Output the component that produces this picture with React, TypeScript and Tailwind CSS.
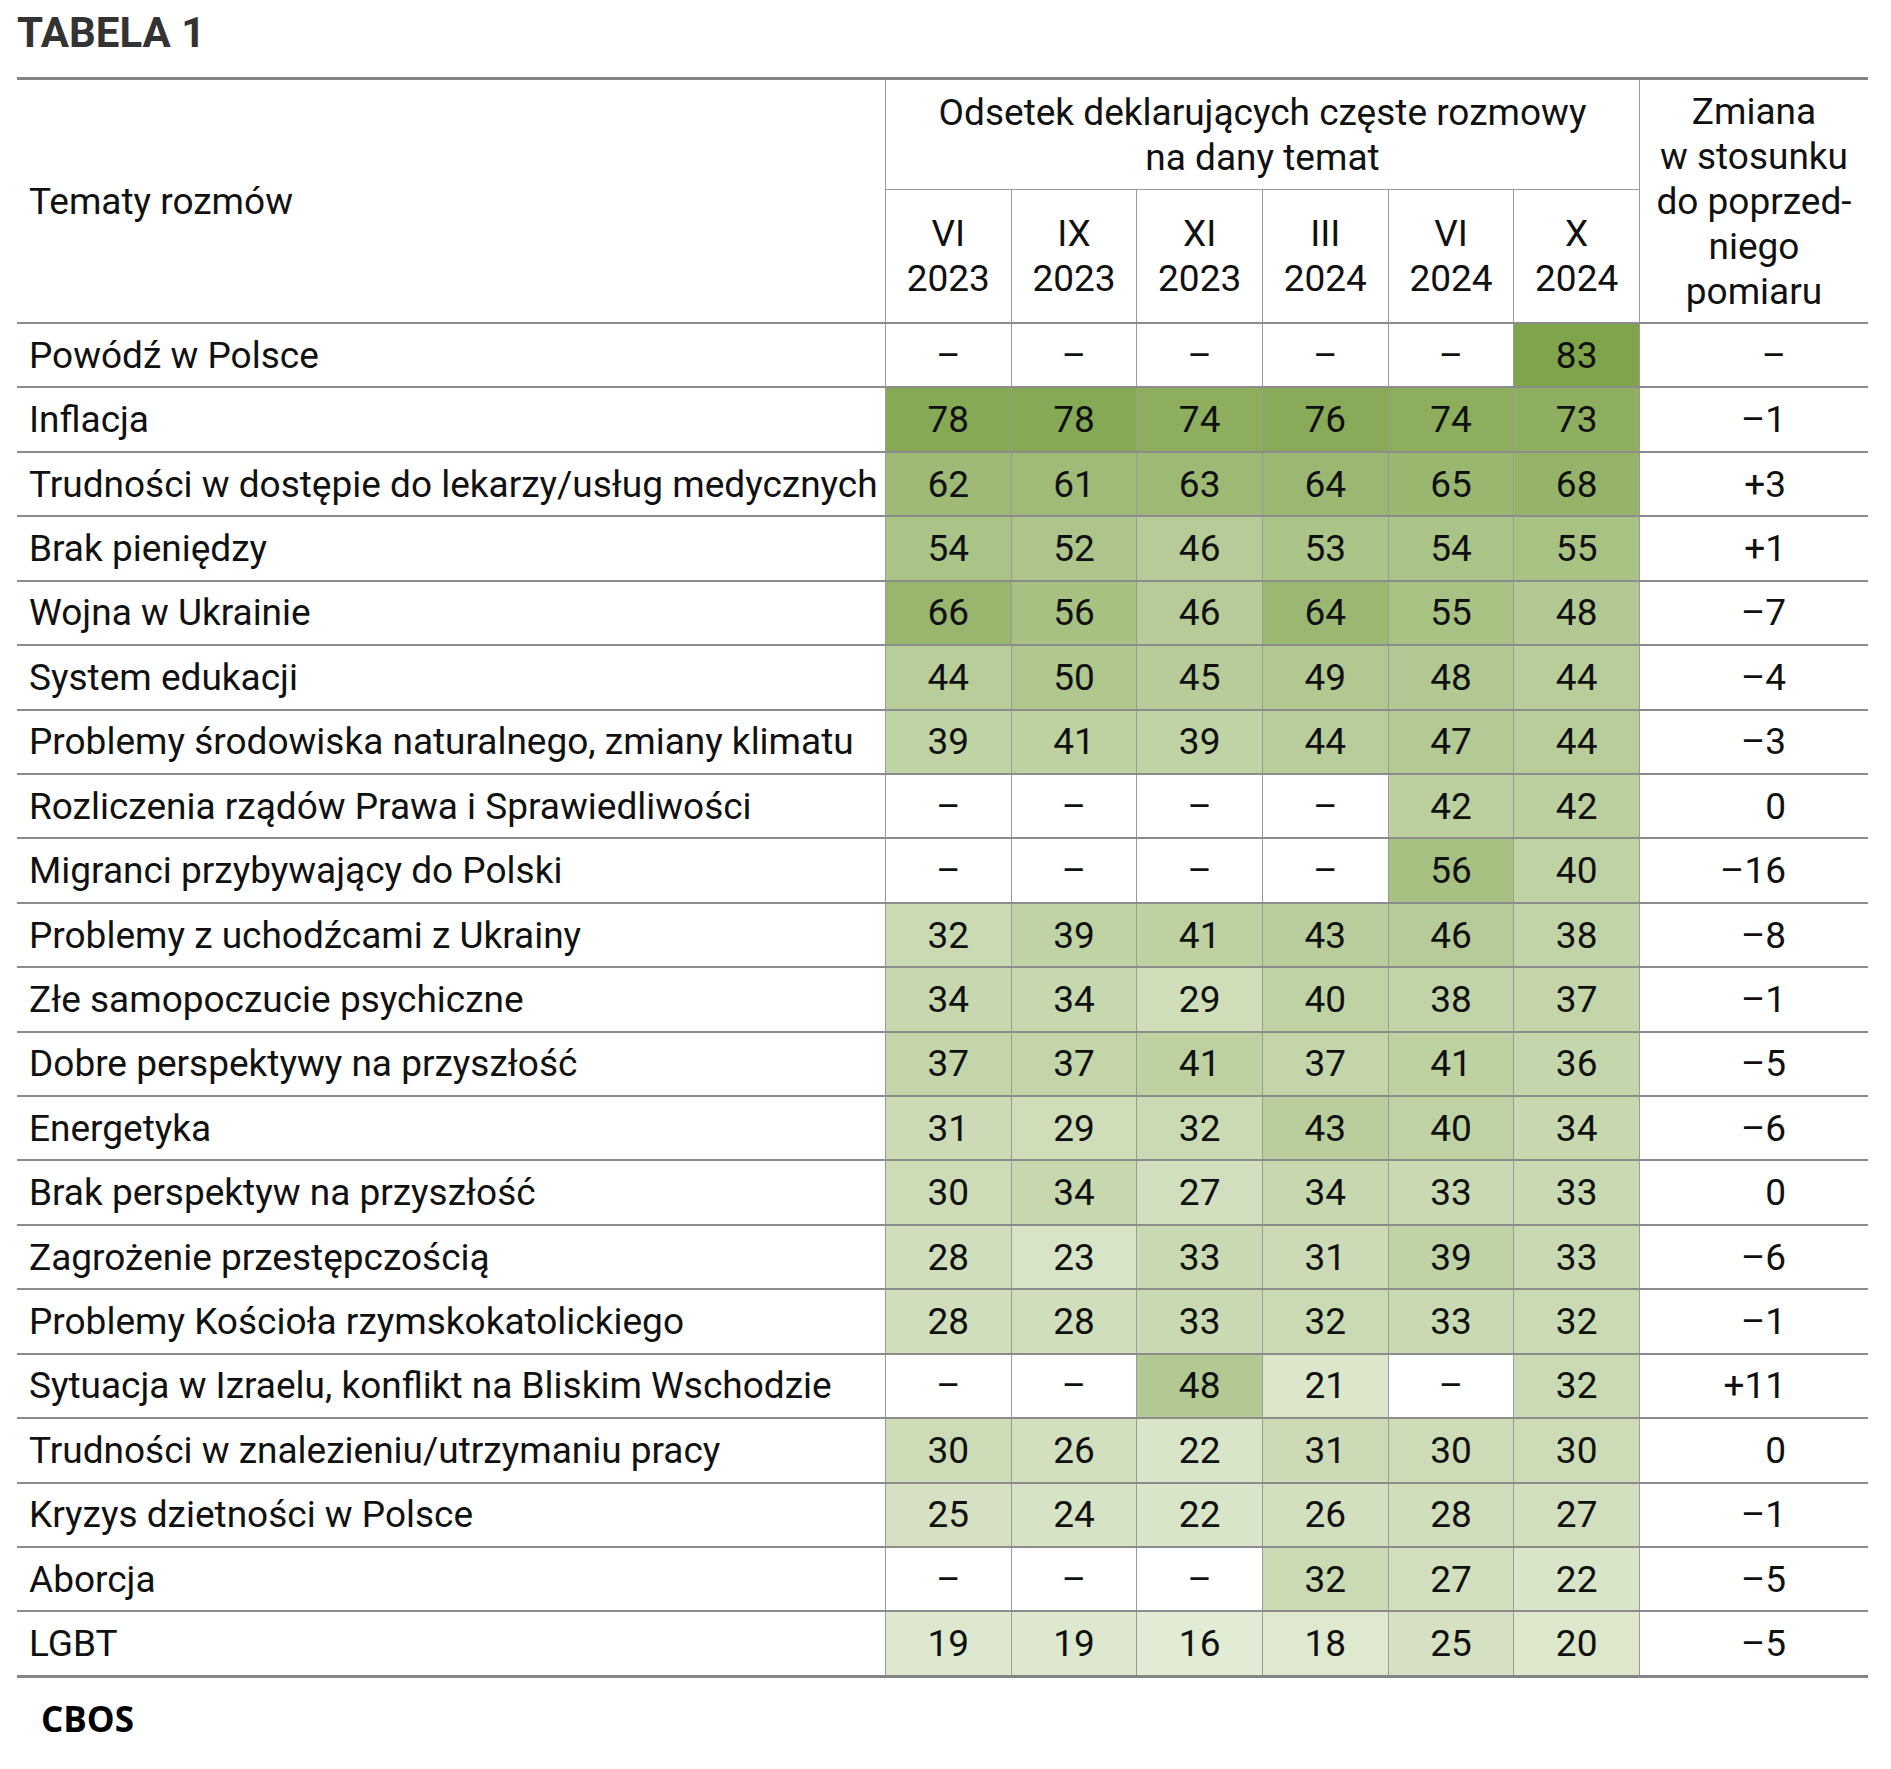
import React from "react";

type Row = {
	label: string;
	values: (number | null)[];
	change: string;
};

const rows: Row[] = [
	{ label: "Powódź w Polsce", values: [null, null, null, null, null, 83], change: "–" },
	{ label: "Inflacja", values: [78, 78, 74, 76, 74, 73], change: "–1" },
	{ label: "Trudności w dostępie do lekarzy/usług medycznych", values: [62, 61, 63, 64, 65, 68], change: "+3" },
	{ label: "Brak pieniędzy", values: [54, 52, 46, 53, 54, 55], change: "+1" },
	{ label: "Wojna w Ukrainie", values: [66, 56, 46, 64, 55, 48], change: "–7" },
	{ label: "System edukacji", values: [44, 50, 45, 49, 48, 44], change: "–4" },
	{ label: "Problemy środowiska naturalnego, zmiany klimatu", values: [39, 41, 39, 44, 47, 44], change: "–3" },
	{ label: "Rozliczenia rządów Prawa i Sprawiedliwości", values: [null, null, null, null, 42, 42], change: "0" },
	{ label: "Migranci przybywający do Polski", values: [null, null, null, null, 56, 40], change: "–16" },
	{ label: "Problemy z uchodźcami z Ukrainy", values: [32, 39, 41, 43, 46, 38], change: "–8" },
	{ label: "Złe samopoczucie psychiczne", values: [34, 34, 29, 40, 38, 37], change: "–1" },
	{ label: "Dobre perspektywy na przyszłość", values: [37, 37, 41, 37, 41, 36], change: "–5" },
	{ label: "Energetyka", values: [31, 29, 32, 43, 40, 34], change: "–6" },
	{ label: "Brak perspektyw na przyszłość", values: [30, 34, 27, 34, 33, 33], change: "0" },
	{ label: "Zagrożenie przestępczością", values: [28, 23, 33, 31, 39, 33], change: "–6" },
	{ label: "Problemy Kościoła rzymskokatolickiego", values: [28, 28, 33, 32, 33, 32], change: "–1" },
	{ label: "Sytuacja w Izraelu, konflikt na Bliskim Wschodzie", values: [null, null, 48, 21, null, 32], change: "+11" },
	{ label: "Trudności w znalezieniu/utrzymaniu pracy", values: [30, 26, 22, 31, 30, 30], change: "0" },
	{ label: "Kryzys dzietności w Polsce", values: [25, 24, 22, 26, 28, 27], change: "–1" },
	{ label: "Aborcja", values: [null, null, null, 32, 27, 22], change: "–5" },
	{ label: "LGBT", values: [19, 19, 16, 18, 25, 20], change: "–5" },
];

const periods = [
	["VI", "2023"],
	["IX", "2023"],
	["XI", "2023"],
	["III", "2024"],
	["VI", "2024"],
	["X", "2024"],
];

// heat colour: light sage at 16 -> olive green at 83
const heat = (v: number | null) => {
	if (v === null) return "#ffffff";
	const t = Math.min(1, Math.max(0, (v - 16) / 67));
	const lo = [226, 235, 212];
	const hi = [127, 164, 75];
	const c = lo.map((l, i) => Math.round(l + (hi[i] - l) * t));
	return `rgb(${c[0]}, ${c[1]}, ${c[2]})`;
};

const App = () => {
	return (
		<div className="h-[1769px] w-[1891px] bg-white font-['Roboto','Liberation_Sans',sans-serif] text-[#111111]">
			<div className="pl-[17px] pt-[12px]">
				<h1 className="text-[42px] leading-none font-bold text-[#333333]">TABELA 1</h1>
			</div>

			<div className="mt-[23px] ml-[17px] w-[1851px] border-t-[3px] border-b-[3px] border-[#858585]">
				{/* header */}
				<div className="grid h-[242px] grid-cols-[868px_repeat(6,1fr)_229px] grid-rows-[109px_133px] text-[37px] leading-[45px]">
					<div className="row-span-2 flex items-center pl-[12px]">Tematy rozmów</div>
					<div className="col-span-6 flex flex-col items-center justify-center border-l border-[#9a9a9a] text-center">
						<span>Odsetek deklarujących częste rozmowy</span>
						<span>na dany temat</span>
					</div>
					<div className="row-span-2 flex flex-col items-center justify-center border-l border-[#9a9a9a] text-center">
						<span>Zmiana</span>
						<span>w stosunku</span>
						<span>do poprzed-</span>
						<span>niego</span>
						<span>pomiaru</span>
					</div>
					{periods.map(([m, y], i) => (
						<div
							key={i}
							className="flex flex-col items-center justify-center border-t border-l border-[#9a9a9a] text-center"
						>
							<span>{m}</span>
							<span>{y}</span>
						</div>
					))}
				</div>

				{/* body */}
				{rows.map((r) => (
					<div
						key={r.label}
						className="grid h-[64.43px] grid-cols-[868px_repeat(6,1fr)_229px] border-t-2 border-[#8c8c8c] text-[37px] leading-none"
					>
						<div className="flex items-center pl-[12px] whitespace-nowrap">{r.label}</div>
						{r.values.map((v, i) => (
							<div
								key={i}
								className="flex items-center justify-center border-l border-[#9a9a9a]"
								style={{ backgroundColor: heat(v) }}
							>
								{v === null ? "–" : v}
							</div>
						))}
						<div className="flex items-center justify-end border-l border-[#9a9a9a] pr-[82px]">{r.change}</div>
					</div>
				))}
			</div>

			<div className="mt-[23px] pl-[41px]">
				<span className="font-['Open_Sans','DejaVu_Sans',sans-serif] text-[35px] leading-none font-bold text-black">CBOS</span>
			</div>
		</div>
	);
};

export default App;
